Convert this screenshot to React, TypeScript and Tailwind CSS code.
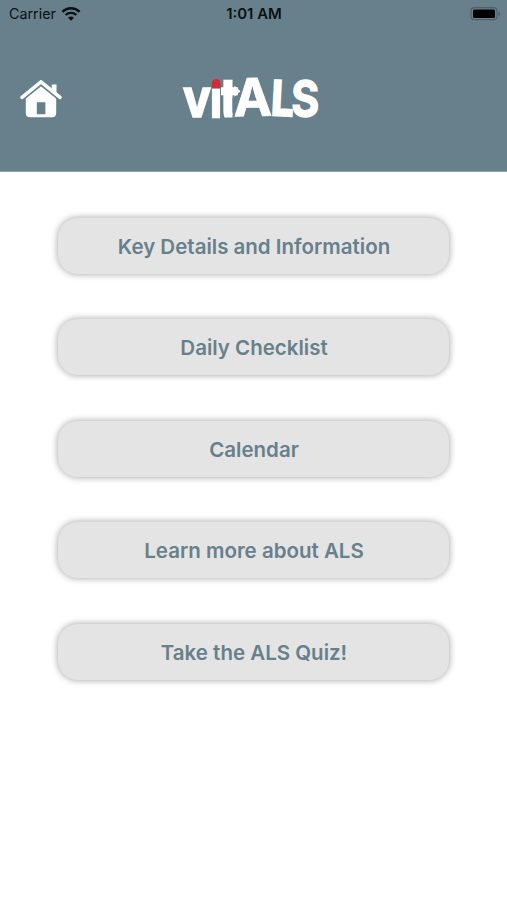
const items = [
  'Key Details and Information',
  'Daily Checklist',
  'Calendar',
  'Learn more about ALS',
  'Take the ALS Quiz!',
];

function Wifi() {
  return (
    <svg width="20" height="15" viewBox="0 0 20 15" fill="none" stroke="#0b1013">
      <path d="M1.4 4.8C6.2.2 13.8.2 18.6 4.8" strokeWidth="2.5" />
      <path d="M4.6 8C7.6 5.2 12.4 5.2 15.4 8" strokeWidth="2.3" />
      <path d="M10 13.7 7 10.7C8.7 9.2 11.3 9.2 13 10.7Z" fill="#0b1013" stroke="none" />
    </svg>
  );
}

function Battery() {
  return (
    <svg width="31" height="15" viewBox="0 0 31 15">
      <rect x="1" y="0.7" width="26" height="12" rx="3.5" fill="none" stroke="#4c616a" strokeWidth="1.2" />
      <rect x="3" y="2.5" width="22" height="8.5" rx="1.5" fill="#000" />
      <path d="M28.5 4.5v4.6c2-.8 2-3.8 0-4.6Z" fill="#4c616a" />
    </svg>
  );
}

function House() {
  return (
    <svg width="42" height="38" viewBox="0 0 42 38">
      <path
        fillRule="evenodd"
        d="M21 4.5 36.2 17.5V33q0 4.2-4.2 4.2H10Q5.8 37.2 5.8 33V17.5ZM16.8 22.2V34.2H25.4V22.2Z"
        fill="#fff"
      />
      <path d="M2 18.2 21 2.8 40 18.2" fill="none" stroke="#67808b" strokeWidth="5.4" />
      <path d="M31.7 4.5h4.8v11.5L31.7 12Z" fill="#fff" />
      <path d="M2 17.3 21 1.8 40 17.3" fill="none" stroke="#fff" strokeWidth="3.5" strokeLinecap="round" strokeLinejoin="round" />
    </svg>
  );
}

function Logo() {
  return (
    <svg
      width="140"
      height="70"
      viewBox="180 63 140 70"
      fill="#fff"
      stroke="#fff"
      className="overflow-visible font-['Inter',sans-serif] text-[53px] font-bold"
    >
      <defs>
        <clipPath id="stem">
          <path d="M221 70h20v28h-8.5v19.5h-11.5Z" />
        </clipPath>
      </defs>
      <text x="183" y="117.2" textLength="28" lengthAdjust="spacingAndGlyphs" strokeWidth="1.6">v</text>
      <text x="208.8" y="117.5" textLength="14.5" lengthAdjust="spacingAndGlyphs" strokeWidth="0.3">ı</text>
      <g clipPath="url(#stem)">
        <text x="219.8" y="120" textLength="19" lengthAdjust="spacingAndGlyphs" strokeWidth="1.6" className="text-[58px]">t</text>
      </g>
      <path d="M211.8 88v-3.8c0-7 8.8-7 8.8 0V88Z" fill="#d5283b" stroke="none" />
      <path d="M234.5 85.7l6 5.6-6 5.4Z" stroke="none" />
      <text x="233.3" y="116" textLength="38.5" lengthAdjust="spacingAndGlyphs" strokeWidth="0.8" className="text-[52px]" transform="rotate(-1 252 97)">A</text>
      <text x="271.5" y="115.5" textLength="22.5" lengthAdjust="spacingAndGlyphs" strokeWidth="2.4" className="text-[48px]" transform="rotate(3 282 97)">L</text>
      <text x="291.2" y="117" textLength="28" lengthAdjust="spacingAndGlyphs" strokeWidth="1.4" className="text-[51px]">S</text>
    </svg>
  );
}

export default function App() {
  return (
    <div className="h-[900px] w-full bg-white font-['Inter',sans-serif]">
      <header className="h-[172px] border-b border-[#8fa3ab] bg-[#67808b]">
        <div className="grid h-7 grid-cols-3 items-center pl-[9px] pr-[6px] text-[#0b1013]">
          <div className="flex items-center gap-[5px] text-[14.3px]">
            <span>Carrier</span>
            <Wifi />
          </div>
          <span className="-ml-[2px] text-center text-[14.9px] font-semibold">1:01 AM</span>
          <div className="flex justify-end"><Battery /></div>
        </div>
        <div className="flex items-start pl-5 pt-[35px]">
          <div className="mt-[17px]"><House /></div>
          <div className="ml-[118px]"><Logo /></div>
        </div>
      </header>
      <main className="flex flex-col gap-[45.5px] px-[58px] pt-[45.5px]">
        {items.map((label) => (
          <button
            key={label}
            className="flex h-14 items-center justify-center rounded-[20px] bg-[#e4e4e4] pl-px pt-[3px] text-[20.5px] font-semibold text-[#67808b] shadow-[0_0_6px_1px_rgba(0,0,0,0.3)]"
          >
            {label}
          </button>
        ))}
      </main>
    </div>
  );
}
